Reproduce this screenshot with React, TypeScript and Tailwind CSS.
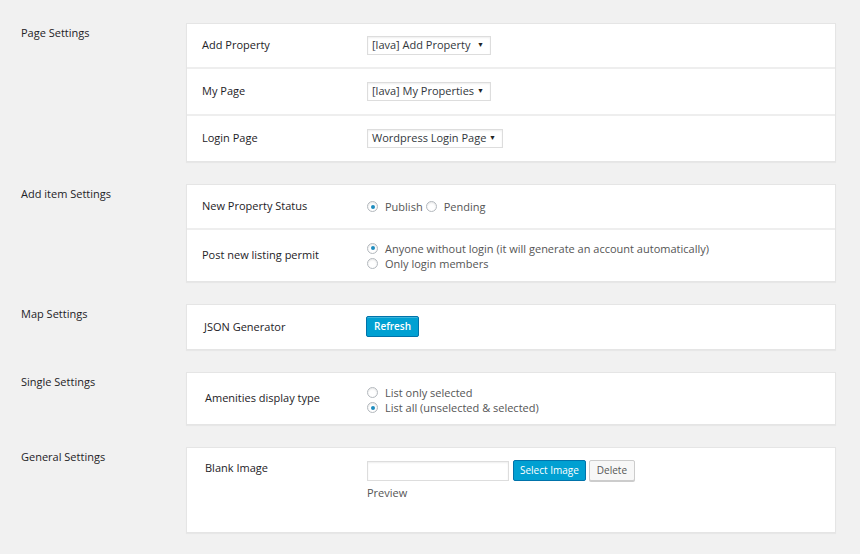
import React from "react";

function FakeSelect(props: { value: string; width: string }) {
  return (
    <div
      className={`flex h-[19px] items-center justify-between border border-[#dddddd] bg-white pl-[4px] pr-[6px] text-[11px] text-[#32373c] shadow-[inset_0_1px_2px_rgba(0,0,0,0.07)] ${props.width}`}
    >
      <span>{props.value}</span>
      <span className="text-[7px] text-[#222]">▼</span>
    </div>
  );
}

function Radio(props: { checked?: boolean; label: string }) {
  return (
    <label className="flex items-center gap-[7px] text-[11px] leading-[15px] text-[#555]">
      <span className="flex h-[11px] w-[11px] items-center justify-center rounded-full border border-[#b4b9be] bg-white shadow-[inset_0_1px_2px_rgba(0,0,0,0.1)]">
        {props.checked && <span className="h-[4px] w-[4px] rounded-full bg-[#1e8cbe]" />}
      </span>
      {props.label}
    </label>
  );
}

function Row(props: { label: string; children: React.ReactNode; className?: string; last?: boolean; labelPad?: string }) {
  return (
    <div className={`flex ${props.last ? "" : "border-b-2 border-[#eeeeee]"} ${props.className ?? ""}`}>
      <div className={`w-[180px] shrink-0 text-[11px] text-[#1d2226] ${props.labelPad ?? "pl-[15px]"}`}>
        {props.label}
      </div>
      <div>{props.children}</div>
    </div>
  );
}

function Section(props: { title: string; children: React.ReactNode }) {
  return (
    <div className="flex">
      <div className="w-[186px] shrink-0 pl-[21px] pt-[2px] text-[11px] text-[#1d2226]">{props.title}</div>
      <div className="w-[650px] border border-[#e5e5e5] bg-white shadow-[0_1px_1px_rgba(0,0,0,0.04)]">{props.children}</div>
    </div>
  );
}

export default function App() {
  return (
    <div className="min-h-[554px] bg-[#f1f1f1] pt-[23px] font-['Open_Sans',sans-serif]">
      <div className="flex flex-col gap-[22px]">
        <Section title="Page Settings">
          <Row label="Add Property" className="h-[45px] items-center">
            <FakeSelect value="[lava] Add Property" width="w-[124px]" />
          </Row>
          <Row label="My Page" className="h-[47px] items-center">
            <FakeSelect value="[lava] My Properties" width="w-[124px]" />
          </Row>
          <Row label="Login Page" className="h-[45px] items-center" last>
            <FakeSelect value="Wordpress Login Page" width="w-[136px]" />
          </Row>
        </Section>

        <Section title="Add item Settings">
          <Row label="New Property Status" className="h-[45px] items-center">
            <div className="flex items-center gap-[3px]">
              <Radio checked label="Publish" />
              <Radio label="Pending" />
            </div>
          </Row>
          <Row label="Post new listing permit" className="h-[51px] items-center" last>
            <div className="flex flex-col">
              <Radio checked label="Anyone without login (it will generate an account automatically)" />
              <Radio label="Only login members" />
            </div>
          </Row>
        </Section>

        <Section title="Map Settings">
          <Row label="JSON Generator" className="h-[44px] items-center" labelPad="pl-[17px]" last>
            <button className="-ml-px -mt-[2px] flex h-[21px] items-center rounded-[2px] border border-[#0073aa] bg-[#00a0d2] px-[7px] text-[10px] font-semibold text-white shadow-[inset_0_1px_0_rgba(120,200,230,0.5)]">
              Refresh
            </button>
          </Row>
        </Section>

        <Section title="Single Settings">
          <Row label="Amenities display type" className="h-[51px] items-center" labelPad="pl-[18px]" last>
            <div className="flex flex-col pt-[3px]">
              <Radio label="List only selected" />
              <Radio checked label="List all (unselected & selected)" />
            </div>
          </Row>
        </Section>

        <Section title="General Settings">
          <Row label="Blank Image" className="h-[84px] items-start pt-[12px]" labelPad="pl-[18px]" last>
            <div className="flex flex-col">
              <div className="flex items-center gap-[4px]">
                <div className="h-[20px] w-[142px] border border-[#dddddd] bg-white shadow-[inset_0_1px_2px_rgba(0,0,0,0.07)]" />
                <button className="flex h-[21px] items-center rounded-[2px] border border-[#0073aa] bg-[#00a0d2] px-[6px] text-[10px] text-white">
                  Select Image
                </button>
                <button className="-ml-px flex h-[21px] items-center rounded-[2px] border border-[#cccccc] bg-[#f7f7f7] px-[7px] text-[10px] text-[#555] shadow-[0_1px_0_#ccc]">
                  Delete
                </button>
              </div>
              <div className="mt-[4px] text-[11px] text-[#555]">Preview</div>
            </div>
          </Row>
        </Section>
      </div>
    </div>
  );
}
